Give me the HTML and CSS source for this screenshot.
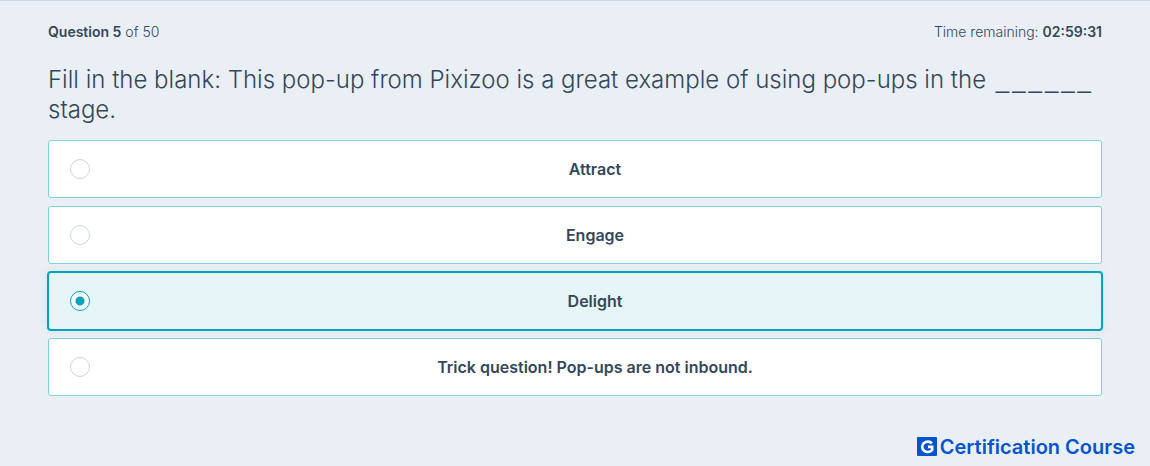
FILE: index.html
```
<!DOCTYPE html>
<html lang="en">
  <head>
    <title>Certification Exam</title>

    <meta charset="UTF-8">
    <meta name="viewport" content="width=device-width, initial-scale=1">

    <link rel="stylesheet" href="styles.css">
  </head>
  <body>
    <main class="exam">
      <div class="exam-status">
        <span><strong>Question 5</strong> of 50</span>
        <span>Time remaining: <strong>02:59:31</strong></span>
      </div>

      <form>
        <fieldset class="question">
          <legend class="question-text">Fill in the blank: This pop-up from Pixizoo is a great example of using pop-ups in the <span class="blank"><span>_</span><span>_</span><span>_</span><span>_</span><span>_</span><span>_</span></span> stage.</legend>

          <label class="answer">
            <input type="radio" name="answer" value="attract">
            <span class="answer-text">Attract</span>
          </label>
          <label class="answer">
            <input type="radio" name="answer" value="engage">
            <span class="answer-text">Engage</span>
          </label>
          <label class="answer">
            <input type="radio" name="answer" value="delight" checked>
            <span class="answer-text">Delight</span>
          </label>
          <label class="answer">
            <input type="radio" name="answer" value="trick">
            <span class="answer-text">Trick question! Pop-ups are not inbound.</span>
          </label>
        </fieldset>
      </form>
    </main>

    <footer class="brand">
      <svg class="brand-icon" width="20" height="20" viewBox="0 0 20 20" aria-hidden="true">
        <rect width="20" height="19" rx="1" fill="#0454cf"/>
        <path d="M15 6.4A5.6 5.2 0 1 0 15.2 13V9.9H11" fill="none" stroke="#fff" stroke-width="2.6"/>
      </svg>
      <span>Certification Course</span>
    </footer>
  </body>
</html>
```

FILE: styles.css
```
* {
  box-sizing: border-box;
}

body {
  margin: 0;
  border-top: 1px solid #cbd6e2;
  background-color: #eaeff6;
  color: #33475b;
  font-family: Inter, "Open Sans", sans-serif;
  font-size: 14px;
  line-height: 20px;
}

.exam {
  padding: 21px 48px 0;
}

.exam-status {
  display: flex;
  justify-content: space-between;
  margin-bottom: 23px;
  font-weight: 300;
}

.exam-status strong {
  font-weight: 600;
}

.question {
  display: flex;
  flex-direction: column;
  gap: 8px;
  min-width: 0;
  margin: 0;
  padding: 0;
  border: 0;
}

.question-text {
  margin-bottom: 15px;
  padding: 0;
  font-size: 24px;
  font-weight: 300;
  line-height: 30px;
}

.blank {
  font-family: "Liberation Sans", sans-serif;
  line-height: 1;
  white-space: nowrap;
}

.blank span {
  margin-left: 3px;
}

.answer {
  display: flex;
  align-items: center;
  padding: 18px 21px;
  border: 1px solid #7fd1de;
  border-radius: 3px;
  background-color: #fff;
  cursor: pointer;
}

.answer:has(input:checked) {
  border-color: #00a4bd;
  background-color: #e5f5f8;
  box-shadow: 0 0 0 1px #00a4bd, 0 0 12px rgba(45, 62, 80, 0.08);
}

.answer input {
  appearance: none;
  flex: none;
  width: 20px;
  height: 20px;
  margin: 0;
  border: 1px solid #cbd6e2;
  border-radius: 50%;
  background-color: #fff;
}

.answer input:checked {
  border-color: #00a4bd;
  background-image: radial-gradient(circle, #00a4bd 4px, transparent 5px);
}

.answer-text {
  flex: 1;
  padding-left: 20px;
  font-size: 16px;
  font-weight: 600;
  text-align: center;
}

.brand {
  display: flex;
  align-items: center;
  justify-content: flex-end;
  gap: 3px;
  padding: 41px 15px 9px;
  color: #0454cf;
  font-size: 20px;
  font-weight: 600;
}
```
